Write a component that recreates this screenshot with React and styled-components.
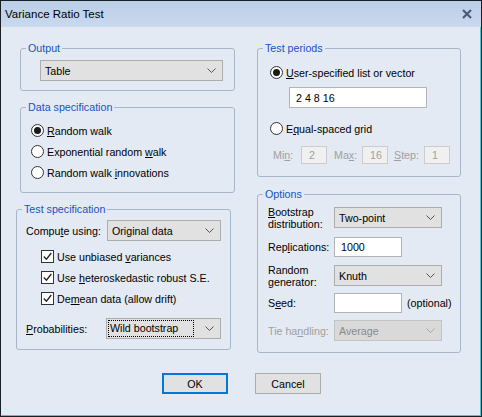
import styled, { createGlobalStyle } from 'styled-components';

const Global = createGlobalStyle`
  html, body { margin: 0; padding: 0; background: #ffffff; }
  body { font-family: "Liberation Sans", Arial, sans-serif; font-size: 10.7px; color: #000; }
`

const Window = styled.div`
  width: 482px;
  height: 417px;
  box-sizing: border-box;
  border: 1px solid #1a1f26;
  box-shadow: inset -1px -1px 0 #4fc3d6;
  background: #e3eaf3;
  display: flex;
  flex-direction: column;
  overflow: hidden;
`

const TitleBar = styled.div`
  height: 26px;
  flex: none;
  display: flex;
  align-items: center;
  justify-content: space-between;
  padding: 0 9px 0 4px;
  background: linear-gradient(#bacfe8, #c9d9ed);
  font-size: 11.5px;
`

const Columns = styled.div`
  display: flex;
  gap: 22px;
  padding: 21px 0 0 19px;
`

const Column = styled.div`
  width: ${p => p.w}px;
  display: flex;
  flex-direction: column;
  align-items: flex-start;
  gap: ${p => p.gap}px;
`

const Group = styled.div`
  position: relative;
  box-sizing: border-box;
  width: ${p => p.w}px;
  height: ${p => p.h}px;
  margin-left: ${p => p.shift || 0}px;
  border: 1px solid #a7b6ca;
  border-radius: 3px;
  padding: ${p => p.pad};
  display: flex;
  flex-direction: column;
`

const Legend = styled.span`
  position: absolute;
  top: -7px;
  left: 5px;
  padding: 0 2px;
  line-height: 13px;
  background: #e3eaf3;
  color: #1a52c4;
`

const Row = styled.div`
  display: flex;
  align-items: center;
  height: ${p => p.h || 21}px;
  margin-top: ${p => p.mt || 0}px;
  padding-left: ${p => p.indent || 0}px;
`

const Label = styled.span`
  width: ${p => p.w}px;
  flex: none;
  line-height: 12px;
  color: ${p => (p.disabled ? '#a0a0a0' : '#000')};
`

const Combo = styled.div`
  box-sizing: border-box;
  width: ${p => p.w}px;
  height: ${p => p.h || 21}px;
  flex: none;
  display: flex;
  align-items: center;
  justify-content: space-between;
  padding: 0 6px 0 ${p => (p.focus ? 2 : 4)}px;
  background: ${p => (p.disabled ? '#d9d9d9' : '#e1e1e1')};
  border: 1px solid ${p => (p.disabled ? '#c4c4c4' : '#adadad')};
  color: ${p => (p.disabled ? '#8a8a8a' : '#000')};
`

const Focus = styled.span`
  flex: 1;
  margin-right: 12px;
  padding: 1px 1px;
  outline: 1px dotted #000;
  line-height: 13px;
`

const Field = styled.div`
  box-sizing: border-box;
  width: ${p => p.w}px;
  height: ${p => p.h || 20}px;
  flex: none;
  display: flex;
  align-items: center;
  padding-left: ${p => (p.disabled ? 7 : 6)}px;
  background: ${p => (p.disabled ? '#f0f0f0' : '#fff')};
  border: 1px solid ${p => (p.disabled ? '#cccccc' : '#b4b4b4')};
  color: ${p => (p.disabled ? '#a0a0a0' : '#000')};
`

const Radio = styled.span`
  box-sizing: border-box;
  width: 13px;
  height: 13px;
  flex: none;
  margin-right: 3px;
  border-radius: 50%;
  border: 1px solid #333;
  background: #fff;
  display: flex;
  align-items: center;
  justify-content: center;
  &::after {
    content: '';
    width: 7px;
    height: 7px;
    border-radius: 50%;
    background: ${p => (p.on ? '#1a1a1a' : 'transparent')};
  }
`

const Box = styled.span`
  box-sizing: border-box;
  width: 13px;
  height: 13px;
  flex: none;
  margin-right: 3px;
  border: 1px solid #333;
  background: #fff;
  display: flex;
  align-items: center;
  justify-content: center;
`

const Note = styled.span`
  margin-left: 5px;
`

const Gap = styled.span`
  width: ${p => p.w}px;
  flex: none;
`

const Footer = styled.div`
  display: flex;
  justify-content: center;
  gap: 27px;
  margin-top: 20px;
  padding-left: 1px;
`

const Button = styled.div`
  box-sizing: border-box;
  width: 66px;
  height: 21px;
  display: flex;
  align-items: center;
  justify-content: center;
  background: #e1e1e1;
  border: ${p => (p.primary ? '2px solid #0078d7' : '1px solid #adadad')};
`

const U = styled.span`
  text-decoration: underline;
`

const Chevron = ({ color = '#555' }) => (
  <svg width="9" height="5" viewBox="0 0 9 5">
    <polyline points="0.5,0.5 4.5,4.5 8.5,0.5" fill="none" stroke={color} strokeWidth="1" />
  </svg>
)

const Check = () => (
  <svg width="9" height="9" viewBox="0 0 9 9">
    <polyline points="0.8,4.5 3.4,7.2 8.3,1" fill="none" stroke="#222" strokeWidth="1.3" />
  </svg>
)

const CloseX = () => (
  <svg width="10" height="10" viewBox="0 0 10 10">
    <path d="M1 1 L9 9 M9 1 L1 9" stroke="#4a5b79" strokeWidth="2.2" />
  </svg>
)

function App() {
  return (
    <>
      <Global />
      <Window>
        <TitleBar>
          <span>Variance Ratio Test</span>
          <CloseX />
        </TitleBar>

        <Columns>
          <Column w={215} gap={16}>
            <Group w={215} h={43} pad="11px 0 0 19px">
              <Legend>Output</Legend>
              <Combo w={183}>Table<Chevron /></Combo>
            </Group>

            <Group w={215} h={86} pad="12px 0 0 10px">
              <Legend>Data specification</Legend>
              <Row><Radio on /><span><U>R</U>andom walk</span></Row>
              <Row><Radio /><span>Exponential random <U>w</U>alk</span></Row>
              <Row><Radio /><span>Random walk <U>i</U>nnovations</span></Row>
            </Group>

            <Group w={215} h={141} shift={-4} pad="10px 0 0 9px">
              <Legend>Test specification</Legend>
              <Row>
                <Label w={81}>Compu<U>t</U>e using:</Label>
                <Combo w={114}>Original data<Chevron /></Combo>
              </Row>
              <Row mt={5} indent={15}><Box><Check /></Box><span>Use unbiased <U>v</U>ariances</span></Row>
              <Row indent={15}><Box><Check /></Box><span>Use <U>h</U>eteroskedastic robust S.E.</span></Row>
              <Row indent={15}><Box><Check /></Box><span>De<U>m</U>ean data (allow drift)</span></Row>
              <Row mt={9}>
                <Label w={80}><U>P</U>robabilities:</Label>
                <Combo w={115} focus><Focus>Wild bootstrap</Focus><Chevron /></Combo>
              </Row>
            </Group>
          </Column>

          <Column w={204} gap={17}>
            <Group w={204} h={129} pad="13px 0 0 12px">
              <Legend>Test periods</Legend>
              <Row><Radio on /><span><U>U</U>ser-specified list or vector</span></Row>
              <Row mt={4} indent={19}><Field w={138} h={21}>2 4 8 16</Field></Row>
              <Row mt={10}><Radio /><span>E<U>q</U>ual-spaced grid</span></Row>
              <Row mt={7} h={18} indent={3}>
                <Label w={28} disabled>Mi<U>n</U>:</Label>
                <Field w={26} h={18} disabled>2</Field>
                <Gap w={7} />
                <Label w={28} disabled>Ma<U>x</U>:</Label>
                <Field w={26} h={18} disabled>16</Field>
                <Gap w={6} />
                <Label w={30} disabled><U>S</U>tep:</Label>
                <Field w={26} h={18} disabled>1</Field>
              </Row>
            </Group>

            <Group w={204} h={159} pad="12px 0 0 10px">
              <Legend>Options</Legend>
              <Row>
                <Label w={66}><U>B</U>ootstrap<br />distribution:</Label>
                <Combo w={108}>Two-point<Chevron /></Combo>
              </Row>
              <Row mt={9} h={20}>
                <Label w={66}>Rep<U>l</U>ications:</Label>
                <Field w={68}>1000</Field>
              </Row>
              <Row mt={8}>
                <Label w={66}>Random<br /><U>g</U>enerator:</Label>
                <Combo w={108}>Knuth<Chevron /></Combo>
              </Row>
              <Row mt={7} h={20}>
                <Label w={66}>S<U>e</U>ed:</Label>
                <Field w={68} />
                <Note>(optional)</Note>
              </Row>
              <Row mt={7}>
                <Label w={66} disabled>Tie ha<U>n</U>dling:</Label>
                <Combo w={108} disabled>Average<Chevron color="#aaa" /></Combo>
              </Row>
            </Group>
          </Column>
        </Columns>

        <Footer>
          <Button primary>OK</Button>
          <Button>Cancel</Button>
        </Footer>
      </Window>
    </>
  );
}

export default App;
